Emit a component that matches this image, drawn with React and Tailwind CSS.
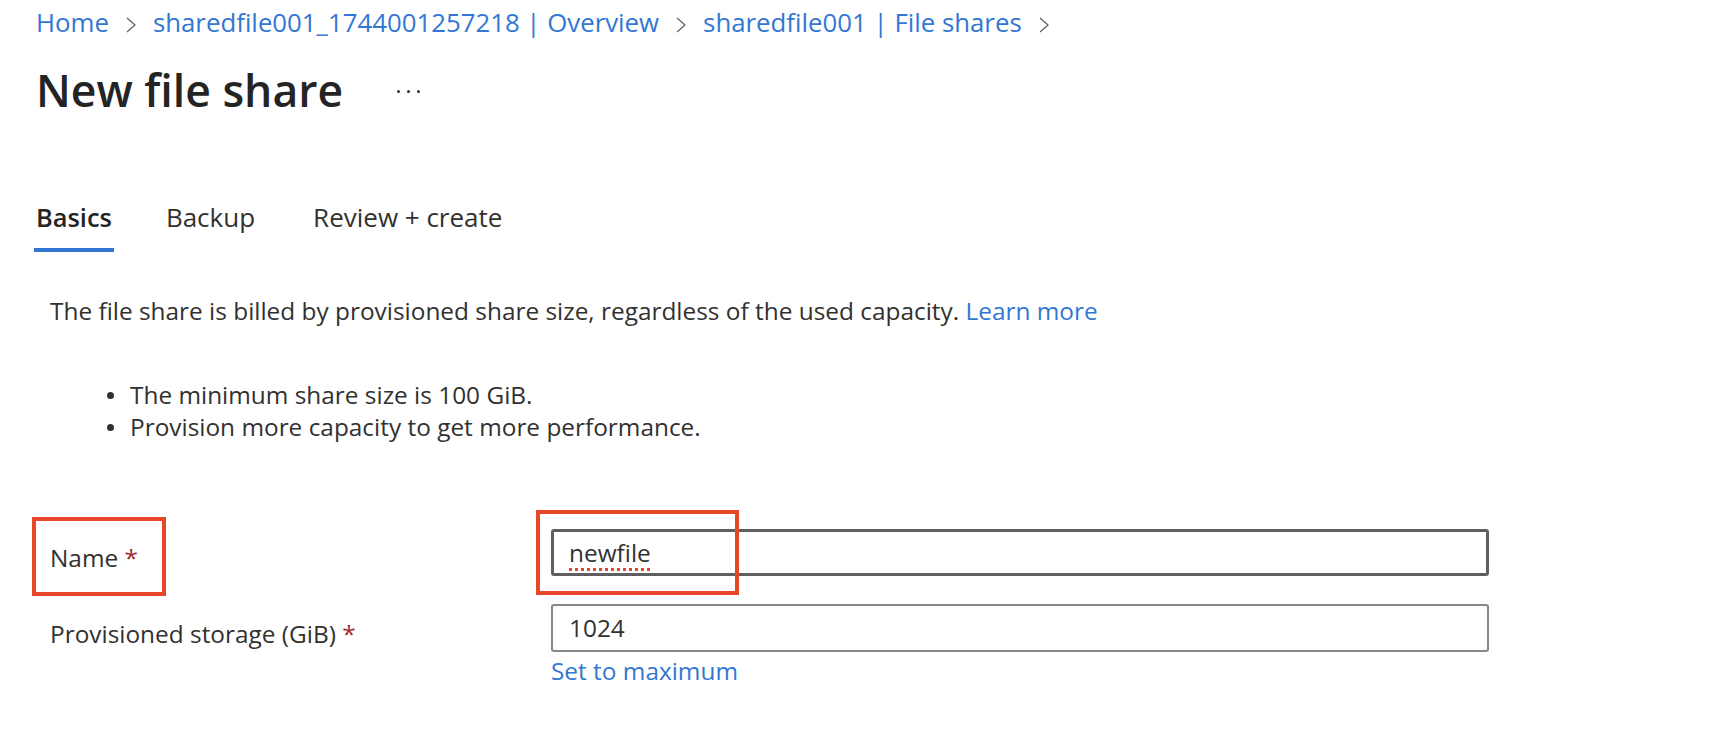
import React from "react";

const crumbs = [
  "Home",
  "sharedfile001_1744001257218 | Overview",
  "sharedfile001 | File shares",
];

const Chevron = () => (
  <svg width="12" height="16" viewBox="0 0 12 16" className="mx-[16px] mt-[6px]">
    <polyline points="2,1 10,8 2,15" fill="none" stroke="#605e5c" strokeWidth="1.2" />
  </svg>
);

const NewFileShare = () => {
  return (
    <div className="relative min-h-screen bg-white text-[#323130] font-['Open_Sans','Noto_Sans',sans-serif]">
      <div className="pl-[36px] pt-[5px]">
        {/* Breadcrumb */}
        <nav className="flex items-center text-[25.8px] leading-[34px] text-[#3277d3]">
          {crumbs.map((c) => (
            <React.Fragment key={c}>
              <span>{c}</span>
              <Chevron />
            </React.Fragment>
          ))}
        </nav>

        {/* Title */}
        <div className="mt-[23px] flex items-center">
          <h1 className="text-[44.5px] leading-[56px] font-semibold text-[#242424]">
            New file share
          </h1>
          <div className="ml-[54px] mt-[2px] flex gap-[7px]">
            <span className="w-[3px] h-[3px] rounded-full bg-[#323130]" />
            <span className="w-[3px] h-[3px] rounded-full bg-[#323130]" />
            <span className="w-[3px] h-[3px] rounded-full bg-[#323130]" />
          </div>
        </div>

        {/* Tabs */}
        <div className="mt-[82px] flex text-[26px] leading-[34px]">
          <div className="-ml-[2px] px-[2px] pb-[14px] border-b-4 border-[#3277d3] font-semibold text-[25.4px] text-[#242424]">
            Basics
          </div>
          <div className="ml-[52px] pb-[14px]">Backup</div>
          <div className="ml-[58px] pb-[14px]">Review + create</div>
        </div>
      </div>

      <div className="pl-[50px]">
        {/* Description */}
        <p className="mt-[42px] text-[24.4px] leading-[34px]">
          The file share is billed by provisioned share size, regardless of the used capacity.{" "}
          <span className="text-[#3277d3]">Learn more</span>
        </p>

        <ul className="mt-[51px] text-[24.4px] leading-[32px]">
          <li className="flex items-center">
            <span className="ml-[57px] w-[7px] h-[7px] rounded-full bg-[#323130]" />
            <span className="ml-[16px]">The minimum share size is 100 GiB.</span>
          </li>
          <li className="flex items-center">
            <span className="ml-[57px] w-[7px] h-[7px] rounded-full bg-[#323130]" />
            <span className="ml-[16px]">Provision more capacity to get more performance.</span>
          </li>
        </ul>

        {/* Form */}
        <div className="mt-[86px] text-[24.4px]">
          <div className="relative flex">
            <label className="w-[501px] pt-[12px] leading-[34px]">
              Name <span className="text-[#a4262c]">*</span>
            </label>
            <div className="w-[938px] h-[47px] border-[3px] border-[#5f5f5f] rounded-[3px] px-[15px] pt-[2px] flex items-center">
              <span className="underline decoration-dotted decoration-[3px] decoration-[#e5432b] underline-offset-[6px]">
                newfile
              </span>
            </div>
            {/* annotation boxes */}
            <div className="absolute left-[-18px] top-[-12px] w-[134px] h-[79px] border-4 border-[#e8462b]" />
            <div className="absolute left-[486px] top-[-19px] w-[203px] h-[85px] border-4 border-[#e8462b]" />
          </div>

          <div className="mt-[28px] flex">
            <label className="w-[501px] pt-[13px] leading-[34px]">
              Provisioned storage (GiB) <span className="text-[#a4262c]">*</span>
            </label>
            <div>
              <div className="w-[938px] h-[48px] border-2 border-[#8a8886] rounded-[3px] px-[16px] flex items-center">
                1024
              </div>
              <div className="mt-[2px] leading-[34px] text-[#3277d3]">Set to maximum</div>
            </div>
          </div>
        </div>
      </div>
    </div>
  );
};

export default NewFileShare;
